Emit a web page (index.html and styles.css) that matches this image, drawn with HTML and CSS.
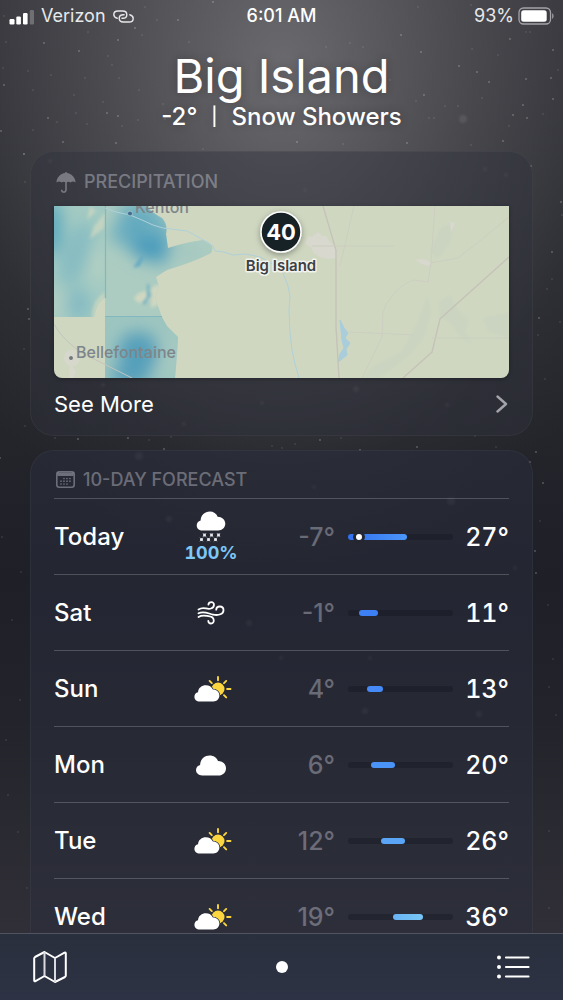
FILE: index.html
```html
<!DOCTYPE html>
<html lang="en">
<head>
<meta charset="utf-8">
<meta name="viewport" content="width=device-width, initial-scale=1">
<title>Weather</title>
<link rel="stylesheet" href="styles.css">
</head>
<body>
<svg class="defs" width="0" height="0" aria-hidden="true">
  <symbol id="cloud" viewBox="0 0 30 21"><path fill="#fff" d="M6.200 20.500C2.600 20.500 0 18.200 0 15.100C0 12.500 1.600 10.500 4.100 9.900C4.300 4.200 8.500 .4 13.700 .4C17.600 .4 20.700 2.500 22 6C26.500 6 30 9.100 30 13.200C30 17.400 26.800 20.500 22.500 20.500Z"/></symbol>
  <symbol id="cloud-sun" viewBox="0 0 38 26">
    <circle cx="24" cy="13" r="6.500" fill="#fcd63f"/>
    <path d="M24 1v3.200M32.200 4.900l-2.200 2.200M36.500 13h-3.400M32.200 21.400l-2.200-2.200M15.600 4.900l2.200 2.200" stroke="#fcd63f" stroke-width="1.900" stroke-linecap="round"/>
    <path d="M5.800 25.500C2.500 25.500 .4 23.500 .4 20.700C.4 18.400 1.800 16.700 4 16.200C4.300 12 7.800 9.300 11.900 9.300C15.100 9.300 17.600 10.800 18.900 13.600C22.700 13.600 25.400 16.200 25.400 19.600C25.400 23 22.900 25.500 19.400 25.500Z" fill="#fff" stroke="#262936" stroke-width="1.600" paint-order="stroke"/>
  </symbol>
</svg>
<svg class="stars" viewBox="0 0 563 1000" preserveAspectRatio="xMidYMin slice" aria-hidden="true">
  <path class="star-dim" d="M4 16h0M6 42h0M88 32h0M145 7h0M157 20h0M3 68h0M28 71h0M51 75h0M85 78h0M119 78h0M33 90h0M112 65h0M108 56h0M74 95h0M103 102h0M163 104h0M165 119h0M57 122h0M87 124h0M122 126h0M138 120h0M33 130h0M76 113h0M139 90h0M142 35h0M189 42h0M326 47h0M350 43h0M363 47h0M418 7h0M530 32h0M526 32h0M472 49h0M498 55h0M482 98h0M445 106h0M458 106h0M429 118h0M434 118h0M416 101h0M390 80h0M558 70h0M471 5h0M543 114h0M509 126h0M24 154h0M25 182h0M203 149h0M24 349h0M343 144h0M471 145h0M562 215h0M552 279h0M547 289h0M538 335h0M560 322h0M545 379h0M25 426h0M55 438h0M149 440h0M171 437h0M272 446h0M282 448h0M295 444h0M341 438h0M475 436h0M496 447h0M21 572h0M2 537h0M540 521h0M548 605h0M553 659h0M549 687h0M556 715h0M8 795h0M18 832h0M27 888h0M549 831h0M549 908h0M12 620h0M20 700h0M6 740h0"/>
  <path class="star" d="M44 43h0M79 51h0M118 40h0M135 28h0M178 20h0M213 2h0M4 85h0M48 118h0M107 113h0M118 116h0M1 131h0M401 35h0M421 52h0M459 66h0M477 72h0M489 82h0M526 79h0M551 78h0M553 50h0M553 99h0M510 39h0M523 105h0M513 115h0M527 118h0M424 95h0M63 142h0M116 143h0M24 154h0M297 142h0M407 143h0M503 141h0M561 202h0M531 166h0M552 252h0M539 318h0M28 309h0M29 319h0M128 438h0M78 439h0M164 449h0M360 450h0M320 440h0M417 447h0M530 462h0M543 483h0M536 452h0M0 458h0M536 573h0M535 551h0"/>
  <g class="glow"><circle cx="463" cy="119" r="4"/><circle cx="139" cy="456" r="4"/><circle cx="356" cy="389" r="3"/><circle cx="169" cy="519" r="3"/><circle cx="451" cy="501" r="4"/><circle cx="314" cy="487" r="2"/><circle cx="515" cy="568" r="2"/><circle cx="485" cy="169" r="2"/><circle cx="506" cy="175" r="2"/><circle cx="447" cy="405" r="2"/><circle cx="249" cy="623" r="3"/><circle cx="281" cy="658" r="2"/><circle cx="370" cy="658" r="2"/><circle cx="365" cy="711" r="3"/><circle cx="479" cy="714" r="3"/><circle cx="50" cy="161" r="2"/><circle cx="305" cy="190" r="2"/><circle cx="103" cy="385" r="2"/><circle cx="184" cy="424" r="2"/><circle cx="262" cy="403" r="2"/></g>
</svg>

<div class="app">
  <div class="status">
    <div class="carrier">
      <svg width="26" height="17" viewBox="0 0 26 17" fill="#fff" aria-hidden="true"><rect x="1.500" y="11" width="5" height="5.500" rx="1.200"/><rect x="8.300" y="8.500" width="4.600" height="8" rx="1.200"/><rect x="15" y="5" width="4.600" height="11.500" rx="1.200"/><rect x="21.800" y="2" width="4.200" height="14.500" rx="1.200" opacity=".25"/></svg>
      <span>Verizon</span>
      <svg width="21" height="13" viewBox="0 0 21 13" fill="none" stroke="#e8e8ea" stroke-width="1.400" stroke-linecap="round" aria-hidden="true"><path d="M4.200 8.300C2 7.700 .8 6.300 .8 4.600C.8 2.500 2.500 1 4.900 1H9.700C12 1 13.800 2.500 13.800 4.700C13.800 6.900 12 8.300 9.700 8.300H8.900"/><path d="M16.800 4.700C19 5.300 20.200 6.600 20.200 8.400C20.200 10.500 18.500 12 16.100 12H10.300C8 12 6.200 10.500 6.200 8.300C6.200 6.100 8 4.700 10.300 4.700H11.100"/></svg>
    </div>
    <time class="clock">6:01 AM</time>
    <div class="power"><span>93%</span>
      <svg width="37" height="18" viewBox="0 0 37 18" aria-hidden="true"><rect x="1" y="1" width="31.500" height="16" rx="4.500" fill="none" stroke="#a3a3a8" stroke-width="1.300"/><rect x="3.200" y="3.200" width="25.500" height="11.600" rx="2.500" fill="#fff"/><path d="M34.200 6.200C36 7 36 11 34.200 11.800Z" fill="#a3a3a8"/></svg>
    </div>
  </div>

  <header class="place">
    <h1>Big Island</h1>
    <p><span>-2°</span><span class="bar">|</span><span>Snow Showers</span></p>
  </header>

  <main class="cards">
    <section class="card card-map">
      <h2 class="card-title">
        <svg width="20" height="22" viewBox="0 0 20 22" aria-hidden="true"><path fill="currentColor" d="M.4 11.600C.8 6.300 4.600 2.600 9.200 2.100V1.200Q10 .2 10.800 1.200V2.100C15.400 2.600 19.200 6.300 19.600 11.600Q16.800 9.500 14.600 11.400Q12.600 10 10.800 11.200V18.400C10.800 20.600 9.600 21.800 7.800 21.800C6 21.800 4.900 20.600 4.900 18.900Q5.700 18 6.500 18.900C6.500 19.700 7 20.200 7.800 20.200C8.700 20.200 9.200 19.600 9.200 18.400V11.200Q7.400 10 5.400 11.400Q3.200 9.500 .4 11.600Z"/></svg>
        PRECIPITATION
      </h2>
      <svg class="map" viewBox="0 0 455 172" preserveAspectRatio="xMidYMid slice" role="img" aria-label="Precipitation map">
        <defs>
          <filter id="soft" x="-60%" y="-60%" width="220%" height="220%"><feGaussianBlur stdDeviation="8"/></filter>
          <filter id="edge" x="-20%" y="-20%" width="140%" height="140%"><feGaussianBlur stdDeviation="1.500"/></filter>
          <filter id="drop" x="-50%" y="-50%" width="200%" height="200%"><feDropShadow dx="0" dy="2" stdDeviation="3" flood-opacity=".35"/></filter>
          <clipPath id="west"><path d="M0 0H51V92Q43 95 40 111H0Z"/></clipPath>
          <clipPath id="north"><path d="M51 0H92Q100 8 108 12Q114 18 112 28L114 42Q133 36 149 34Q162 38 157 47Q140 56 113 64L102 71L105 80L101 92L108 111H51Z"/></clipPath>
          <clipPath id="south"><path d="M51 111H108L113 120L124 131L123 148L121 172H51Z"/></clipPath>
        </defs>
        <rect width="455" height="172" fill="#cfd7c1"/>
        <g fill="#cbd4c0" filter="url(#edge)"><path d="M386 22l14-5l-4 20l-12 16l-8-6zM370 98l4-8l3 16l-6 24l-14 18l-34 26h-16l12-14l28-14l13-22zM385 96l12-8l4 12l14 14l-4 12l8 12l-10-4l-14-18l-10-6zM428 112l27-6v26l-20-6z"/></g>
        <g fill="#d8d8cf"><path d="M251 38l3-8l4 1l6-5l4 4h4l3 5l8 8v9l-10 1l-7-2l-6-4l-3-6zM362 54q8-3 15 3l-2 3q-8-1-13-6zM396 16l5 1l-4 10z"/><circle cx="18" cy="152" r="8" opacity=".7"/><path d="M16 156l6 10l-3 6h-4z" opacity=".7"/></g>
        <g clip-path="url(#west)"><rect width="51" height="112" fill="#a3cac2"/><g filter="url(#soft)"><ellipse cx="-2" cy="22" rx="10" ry="28" fill="#5aa8be"/><ellipse cx="22" cy="48" rx="13" ry="34" fill="#86bcc2" transform="rotate(20 22 48)"/><ellipse cx="24" cy="98" rx="12" ry="16" fill="#83bac3"/><ellipse cx="0" cy="98" rx="12" ry="18" fill="#b0cfc2"/><path d="M46 30L36 60L44 80L51 60Z" fill="#b9d3c3"/></g><g filter="url(#edge)" fill="#cbd6c1"><path d="M52 6L40 20L36 33L50 22ZM36 0l-3 14l9-9zM51 86Q38 94 38 112H52Z" opacity=".8"/></g></g>
        <g clip-path="url(#north)"><rect x="51" width="110" height="111" fill="#acccc1"/><g filter="url(#soft)"><path d="M54 32L70 -4H100L120 26L112 62L84 50Z" fill="#6fb0c0"/><ellipse cx="96" cy="42" rx="18" ry="13" fill="#4c9cbc"/><ellipse cx="82" cy="20" rx="10" ry="12" fill="#5fa8bf"/><ellipse cx="135" cy="47" rx="14" ry="6" fill="#9fc5bf"/></g><path d="M92 46L87 50L79 62L86 60Z" fill="#68aac2" filter="url(#edge)"/><path d="M80 92q5-7 12-7l4 8q-7 7-14 2zM97 82l12-6v20l-12 6z" fill="#cfd7c1" filter="url(#edge)"/><path d="M93 77q4 2 2 8l2 4l-6 10l-3-2l5-6zM108 88l-3 8" fill="#79b2c0" filter="url(#edge)"/></g>
        <g clip-path="url(#south)"><rect x="51" y="111" width="74" height="61" fill="#9dc5c0"/><g filter="url(#soft)"><ellipse cx="84" cy="146" rx="20" ry="20" fill="#559fbb"/><ellipse cx="76" cy="170" rx="20" ry="10" fill="#559fbb"/><ellipse cx="119" cy="150" rx="7" ry="24" fill="#a9cbc2"/></g></g>
        <path d="M51.500 0V92M51 110.500H108" stroke="#79b2bf" stroke-width="1.200" opacity=".8" fill="none"/>
        <g fill="none" stroke="#afd0d8" stroke-width="1"><path d="M51 2L62 6L76 9L88 14L99 19L109 22L133 25L146 32L159 40L161 45L170 46L179 49L192 48L206 51L217 57L229 67L234 80L236 90L235 104L236 127L238 144L241 158L245 172"/><path d="M286 114l4 8l4 5l-3 5l5 5l-4 6l1 6l-5 4l-4 3l2-8l4-6l-2-8z" fill="#a9cddb" stroke="#a9cddb"/></g>
        <g fill="none" stroke="#c5c3b8" stroke-width="1.400"><path d="M269 0L282 44V121L285 172M455 51L386 113L378 146L349 172"/><path d="M0 118Q8 134 30 148L78 172" stroke="#c3c3bd" stroke-width="1"/><path d="M381 0L377 57L374 76L359 74Q345 80 339 89Q331 97 329 107L328 131L308 172M377 57L404 52Q430 32 455 11M300 0L286 60M295 126L360 129M378 132H455M258 40H340" stroke="#cbcec0" stroke-width="1"/></g>
        <circle cx="76" cy="7.500" r="2.500" fill="#426f91" stroke="#9bc2cd"/><text class="town" x="81" y="7">Kenton</text>
        <circle cx="17" cy="152" r="2.500" fill="#74777a" stroke="#e0e1da"/><text class="town" x="22" y="152">Bellefontaine</text>
        <circle cx="227" cy="26" r="20" fill="#192126" stroke="#fff" stroke-width="1.500" filter="url(#drop)"/>
        <text class="pin-value" x="227" y="34">40</text>
        <text class="pin-name" x="227" y="65">Big Island</text>
      </svg>
      <a class="more" href="#map">See More <svg width="12" height="18" viewBox="0 0 12 18" fill="none" stroke="#a3a4a9" stroke-width="2.400" stroke-linecap="round" stroke-linejoin="round" aria-hidden="true"><path d="M1.500 1.500L10 9L1.500 16.500"/></svg></a>
    </section>

    <section class="card card-days">
      <h2 class="card-title">
        <svg width="19" height="17" viewBox="0 0 19 17" aria-hidden="true"><rect x=".8" y=".8" width="17.400" height="15.400" rx="2.500" fill="none" stroke="currentColor" stroke-width="1.600"/><path d="M1.600 1.600h15.800v3.400H1.600z" fill="currentColor"/><path d="M8 7.500h0M11 7.500h0M14 7.500h0M5 10.200h0M8 10.200h0M11 10.200h0M14 10.200h0M5 13h0M8 13h0M11 13h0" stroke="currentColor" stroke-width="1.700" stroke-linecap="round"/></svg>
        10-DAY FORECAST
      </h2>
      <ul class="days">
        <li><span class="day">Today</span><span class="sky"><svg width="30" height="31" viewBox="0 0 30 31" aria-hidden="true"><use href="#cloud" width="30" height="20"/><path d="M8.500 24h0M15.500 24h0M22.500 24h0M5.500 28.500h0M12.500 28.500h0M19.500 28.500h0" stroke="#e9e9ec" stroke-width="3" stroke-linecap="round"/><path d="M7 22.200l3 3.600M10 22.200l-3 3.600M14 22.200l3 3.600M17 22.200l-3 3.600M21 22.200l3 3.600M24 22.200l-3 3.600M4 26.700l3 3.600M7 26.700l-3 3.600M11 26.700l3 3.600M14 26.700l-3 3.600M18 26.700l3 3.600M21 26.700l-3 3.600" stroke="#e9e9ec" stroke-width=".7"/></svg><b>100%</b></span><span class="low">-7°</span><span class="track"><i class="range" style="width:56%;background:linear-gradient(90deg,#3270ed,#4b97f8)"></i><i class="now"></i></span><span class="high">27°</span></li>
        <li><span class="day">Sat</span><span class="sky"><svg width="28" height="24" viewBox="0 0 28 24" fill="none" stroke="#fff" stroke-width="1.800" stroke-linecap="round" aria-hidden="true"><path d="M1.500 8.500C7 5 9.500 9 14 7.500C18 6.200 17.800 1.200 14.400 1.200C12.700 1.200 11.600 2.200 11.400 3.600M1.500 12.300C7 9.500 11 12.500 16 13.600C22 14.800 26.500 13 26.500 9.200C26.500 6.800 24.800 5.500 22.800 5.500C20.700 5.500 19.300 6.900 19.200 8.700M1.500 16C5.500 13.500 9 15 12.500 15.300C17.800 15.800 18 22.500 14 22.500C12.500 22.500 11.400 21.500 11.300 20"/></svg></span><span class="low">-1°</span><span class="track"><i class="range" style="margin-left:10%;width:19%;background:#3d80f5"></i></span><span class="high">11°</span></li>
        <li><span class="day">Sun</span><span class="sky"><svg class="wide" width="38" height="26" aria-hidden="true"><use href="#cloud-sun"/></svg></span><span class="low">4°</span><span class="track"><i class="range" style="margin-left:18%;width:15%;background:#458af6"></i></span><span class="high">13°</span></li>
        <li><span class="day">Mon</span><span class="sky"><svg width="30" height="21" aria-hidden="true"><use href="#cloud"/></svg></span><span class="low">6°</span><span class="track"><i class="range" style="margin-left:22%;width:23%;background:#4b94f7"></i></span><span class="high">20°</span></li>
        <li><span class="day">Tue</span><span class="sky"><svg class="wide" width="38" height="26" aria-hidden="true"><use href="#cloud-sun"/></svg></span><span class="low">12°</span><span class="track"><i class="range" style="margin-left:31%;width:23%;background:#5aa5f5"></i></span><span class="high">26°</span></li>
        <li><span class="day">Wed</span><span class="sky"><svg class="wide" width="38" height="26" aria-hidden="true"><use href="#cloud-sun"/></svg></span><span class="low">19°</span><span class="track"><i class="range" style="margin-left:43%;width:28%;background:linear-gradient(90deg,#68b4f5,#78c6f4)"></i></span><span class="high">36°</span></li>
      </ul>
    </section>
  </main>

  <nav class="toolbar">
    <button type="button" aria-label="Map"><svg width="34" height="32" viewBox="0 0 34 32" fill="none" stroke="#fff" stroke-width="2" stroke-linejoin="round" aria-hidden="true"><path d="M1.200 7.500Q1.200 6.500 2 6L11.500 1L22 7L31.500 1.600Q32.800 1.200 32.800 2.500V24.500Q32.800 25.500 32 26L22 31L11.500 25L2.500 30.200Q1.200 30.600 1.200 29.500Z"/><path d="M11.500 1V25M22 7V31" stroke="#d9dbe1"/></svg></button>
    <span class="page-dot"></span>
    <button type="button" aria-label="Locations"><svg width="33" height="24" viewBox="0 0 33 24" stroke="#fff" stroke-linecap="round" aria-hidden="true"><path d="M9 2.500H31.500M9 12H31.500M9 21.500H31.500" stroke-width="2.200"/><path d="M2 2.500h0M2 12h0M2 21.500h0" stroke-width="4"/></svg></button>
  </nav>
</div>
</body>
</html>
```
FILE: styles.css
```css
* { box-sizing: border-box; }

body {
  margin: 0;
  color: #fff;
  font-family: Inter, "Liberation Sans", sans-serif;
  background:
    radial-gradient(ellipse 400px 500px at 50% 70px, rgba(132, 130, 134, .7), rgba(110, 110, 114, .42) 45%, rgba(90, 90, 94, .1) 80%, transparent),
    linear-gradient(#323238 0, #2c2d32 200px, #24252b 440px, #1e1f27 580px, #23242b 720px, #302f37 930px);
  background-color: #24252b;
}

.defs { position: absolute; }

.stars {
  position: absolute;
  inset: 0;
  width: 100%;
  height: 100%;
  fill: none;
  stroke: #fff;
  stroke-linecap: round;
}
.star { stroke-width: 2; opacity: .24; }
.star-dim { stroke-width: 2; opacity: .1; }
.glow { stroke: none; fill: #fff; opacity: .08; filter: blur(1px); }

.app {
  position: relative;
  display: flex;
  flex-direction: column;
  height: 100vh;
}

.status {
  display: grid;
  grid-template-columns: 1fr auto 1fr;
  align-items: center;
  height: 32px;
  padding: 0 8px;
  font-size: 18px;
  line-height: 24px;
}
.carrier, .power { display: flex; align-items: center; }
.carrier { gap: 7px; color: #e8e8ea; }
.power { justify-content: flex-end; gap: 4px; color: #e8e8ea; }
.clock { font-weight: 500; }

.place {
  padding: 16px 24px 21px;
  text-align: center;
  text-shadow: 0 0 8px rgba(0, 0, 0, .25);
}
.place h1 { margin: 0; font-size: 47px; font-weight: 400; line-height: 56px; }
.place p {
  display: flex;
  justify-content: center;
  gap: 14px;
  margin: 0;
  font-size: 24px;
  font-weight: 500;
  line-height: 26px;
}
.place .bar { font-size: 18px; }

.cards {
  display: flex;
  flex: 1;
  flex-direction: column;
  gap: 14px;
  min-height: 0;
  padding: 0 30px;
  overflow: hidden;
}
.card {
  flex: none;
  padding: 0 23px;
  border: 1px solid rgba(255, 255, 255, .04);
  border-radius: 24px;
}
.card-map { background: rgba(48, 51, 62, .44); }
.card-days { background: rgba(42, 46, 62, .5); }
.card-title {
  display: flex;
  align-items: center;
  gap: 8px;
  height: 54px;
  margin: 0;
  padding: 6px 2px 0;
  color: rgba(235, 235, 245, .36);
  font-size: 18px;
  font-weight: 500;
  line-height: 24px;
}
.card-days .card-title { height: 47px; padding-top: 10px; }

.map { display: block; width: 100%; height: 172px; border-radius: 0 0 8px 8px; box-shadow: 0 1px 4px rgba(0, 0, 0, .3); }
.town { fill: #7d858b; font-size: 16px; font-weight: 500; }
.pin-value { fill: #fff; font-size: 22px; font-weight: 700; text-anchor: middle; }
.pin-name {
  fill: #3c3f43;
  stroke: #f2f3ee;
  stroke-width: 3px;
  stroke-linejoin: round;
  paint-order: stroke;
  font-size: 15px;
  font-weight: 600;
  text-anchor: middle;
}

.more {
  display: flex;
  align-items: center;
  justify-content: space-between;
  height: 57px;
  padding: 0 1px 5px 0;
  color: #fff;
  font-size: 22px;
  text-decoration: none;
}

.days { margin: 0; padding: 0; list-style: none; }
.days li {
  display: grid;
  grid-template-columns: 114px 86px 81px minmax(0, 1fr) 56px;
  align-items: center;
  height: 76px;
  border-top: 1px solid rgba(255, 255, 255, .2);
  font-size: 25px;
  font-weight: 500;
  line-height: 30px;
}
.day { font-size: 24px; }
.sky { display: flex; flex-direction: column; align-items: center; padding-top: 1px; }
.sky b { color: #7cc8f8; font-size: 18px; font-weight: 700; line-height: 22px; font-variant-numeric: tabular-nums; }
.wide { margin-left: 4px; }
.low { color: rgba(235, 235, 245, .34); text-align: right; }
.high { text-align: right; font-variant-numeric: tabular-nums; }
.track {
  position: relative;
  height: 6px;
  margin-left: 13px;
  border-radius: 3px;
  background: rgba(18, 20, 28, .35);
}
.range { display: block; height: 6px; border-radius: 3px; }
.now {
  position: absolute;
  top: -3px;
  left: 5px;
  width: 12px;
  height: 12px;
  border: 3px solid #242631;
  border-radius: 50%;
  background: #fff;
}

.toolbar {
  display: flex;
  flex: none;
  align-items: center;
  justify-content: space-between;
  height: 67px;
  padding: 0 33px;
  border-top: 1px solid #50545f;
  background: linear-gradient(#2a2f3d, #2d3344);
}
.toolbar button { display: flex; padding: 0; border: 0; background: none; }
.page-dot { width: 12px; height: 12px; border-radius: 50%; background: #fff; }
```
